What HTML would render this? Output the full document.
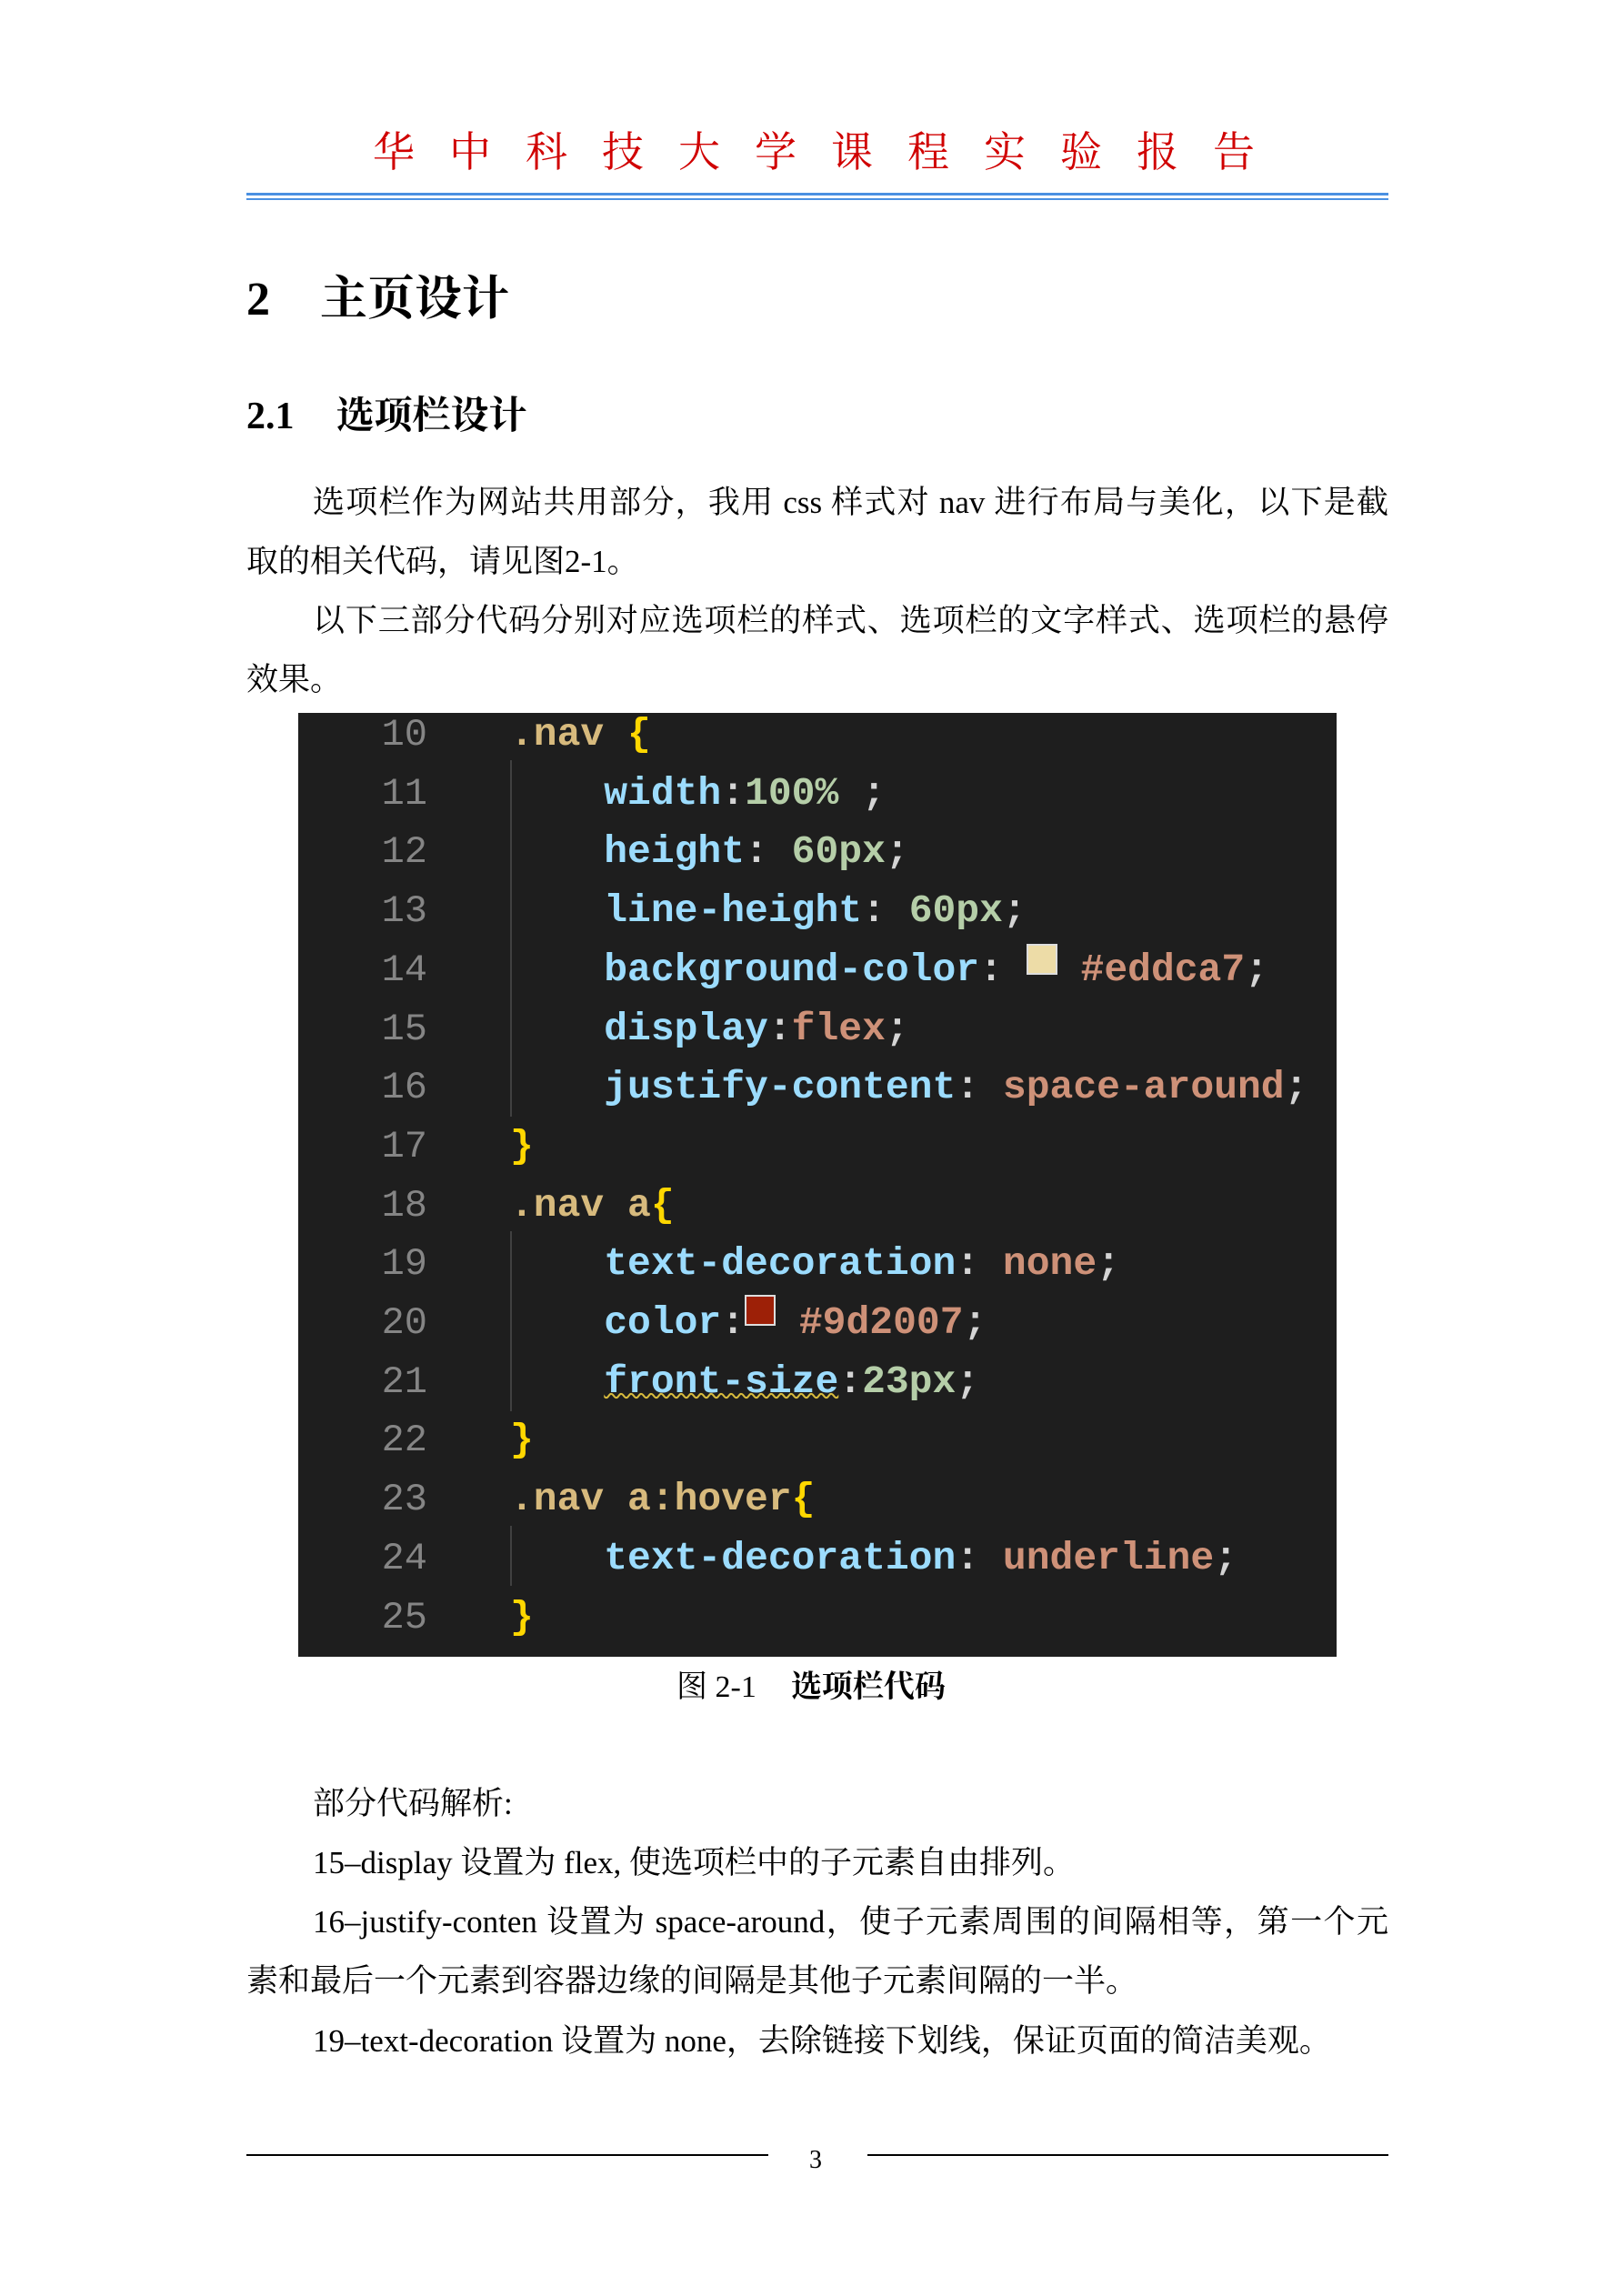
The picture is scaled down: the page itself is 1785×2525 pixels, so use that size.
<!DOCTYPE html>
<html><head><meta charset="utf-8"><style>
body{margin:0;background:#fff;}
#p{position:relative;width:1785px;height:2525px;overflow:hidden;font-family:"Liberation Serif","Noto Serif CJK SC",serif;color:#000;}
.a{position:absolute;white-space:nowrap;}
.t{position:absolute;left:271px;width:1256px;font-size:35px;line-height:65px;}
.j{text-align:justify;text-align-last:justify;white-space:nowrap;}
.code{position:absolute;left:328px;top:784px;width:1142px;height:1038px;background:#1e1e1e;}
.ln{position:absolute;left:0;width:142px;text-align:right;color:#858585;font-family:"Liberation Mono","DejaVu Sans Mono",monospace;font-size:42px;line-height:64.7px;}
.cl{position:absolute;white-space:pre;font-family:"Liberation Mono","DejaVu Sans Mono",monospace;font-size:43px;line-height:64.7px;font-weight:bold;}
.p{color:#9cdcfe}.v{color:#ce9178}.n{color:#b5cea8}.s{color:#d7ba7d}.b{color:#ffd700}.w{color:#d4d4d4}
.g{position:absolute;left:233px;width:2px;background:#404040;}
</style></head><body><div id="p">
<div class="a" style="left:410px;top:138px;font-size:46px;color:#d00000;letter-spacing:38px;line-height:60px;">华中科技大学课程实验报告</div>
<div class="a" style="left:271px;top:212px;width:1256px;height:3px;background:#4a90e2;"></div>
<div class="a" style="left:271px;top:218px;width:1256px;height:2px;background:#4a90e2;"></div>
<div class="a" style="left:271px;top:298px;font-size:52px;font-weight:bold;line-height:64px;">2<span style="display:inline-block;width:55px"></span>主页设计</div>
<div class="a" style="left:271px;top:432px;font-size:42px;font-weight:bold;line-height:52px;">2.1<span style="display:inline-block;width:46px"></span>选项栏设计</div>
<div class="t j" style="top:520px;padding-left:73px;width:1183px;">选项栏作为网站共用部分，我用 css 样式对 nav 进行布局与美化，以下是截</div>
<div class="t" style="top:585px;">取的相关代码，请见图2-1。</div>
<div class="t j" style="top:650px;padding-left:73px;width:1183px;">以下三部分代码分别对应选项栏的样式、选项栏的文字样式、选项栏的悬停</div>
<div class="t" style="top:715px;">效果。</div>
<div class="code">
<div class="g" style="top:52px;height:392px"></div>
<div class="g" style="top:570px;height:198px"></div>
<div class="g" style="top:894px;height:66px"></div>
<div class="ln" style="top:-8px">10<br>11<br>12<br>13<br>14<br>15<br>16<br>17<br>18<br>19<br>20<br>21<br>22<br>23<br>24<br>25</div>
<div class="cl" style="left:233px;top:-8px"><span class="s">.nav</span> <span class="b">{</span>
    <span class="p">width</span><span class="w">:</span><span class="n">100%</span> <span class="w">;</span>
    <span class="p">height</span><span class="w">:</span> <span class="n">60px</span><span class="w">;</span>
    <span class="p">line-height</span><span class="w">:</span> <span class="n">60px</span><span class="w">;</span>
    <span class="p">background-color</span><span class="w">:</span> <span style="display:inline-block;width:30px;height:30px;background:#eddca7;border:2px solid #ddd;vertical-align:6px"></span> <span class="v">#eddca7</span><span class="w">;</span>
    <span class="p">display</span><span class="w">:</span><span class="v">flex</span><span class="w">;</span>
    <span class="p">justify-content</span><span class="w">:</span> <span class="v">space-around</span><span class="w">;</span>
<span class="b">}</span>
<span class="s">.nav a</span><span class="b">{</span>
    <span class="p">text-decoration</span><span class="w">:</span> <span class="v">none</span><span class="w">;</span>
    <span class="p">color</span><span class="w">:</span><span style="display:inline-block;width:30px;height:30px;background:#9d2007;border:2px solid #ddd;vertical-align:8px"></span> <span class="v">#9d2007</span><span class="w">;</span>
    <span class="p" style="text-decoration:underline wavy #d7ba3d;text-decoration-thickness:2px">front-size</span><span class="w">:</span><span class="n">23px</span><span class="w">;</span>
<span class="b">}</span>
<span class="s">.nav a:hover</span><span class="b">{</span>
    <span class="p">text-decoration</span><span class="w">:</span> <span class="v">underline</span><span class="w">;</span>
<span class="b">}</span></div>
</div>
<div class="a" style="left:744px;top:1834px;font-size:34px;line-height:44px;">图 2-1<span style="display:inline-block;width:38px"></span><b>选项栏代码</b></div>
<div class="t" style="top:1951px;left:344px;">部分代码解析:</div>
<div class="t" style="top:2016px;left:344px;">15–display 设置为 flex, 使选项栏中的子元素自由排列。</div>
<div class="t j" style="top:2081px;padding-left:73px;width:1183px;">16–justify-conten 设置为 space-around，使子元素周围的间隔相等，第一个元</div>
<div class="t" style="top:2146px;">素和最后一个元素到容器边缘的间隔是其他子元素间隔的一半。</div>
<div class="t" style="top:2212px;left:344px;">19–text-decoration 设置为 none，去除链接下划线，保证页面的简洁美观。</div>
<div class="a" style="left:271px;top:2369px;width:574px;height:2px;background:#000;"></div>
<div class="a" style="left:954px;top:2369px;width:573px;height:2px;background:#000;"></div>
<div class="a" style="left:890px;top:2356px;font-size:28px;line-height:40px;">3</div>
</div></body></html>
